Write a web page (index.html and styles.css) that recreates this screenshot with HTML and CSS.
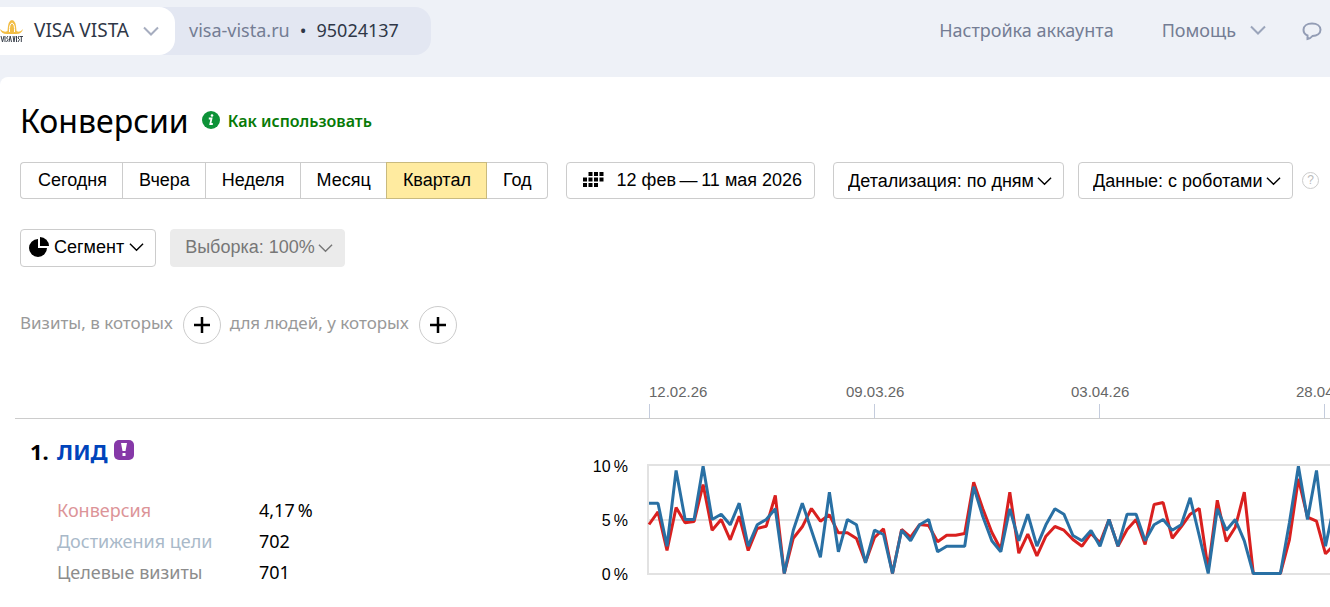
FILE: index.html
```html
<!DOCTYPE html>
<html lang="ru">
<head>
<meta charset="utf-8">
<title>Конверсии</title>
<link rel="stylesheet" href="styles.css">
</head>
<body>
<header class="topbar">
  <div class="counter">
    <button class="account" type="button">
      <svg class="account-logo" viewBox="0 0 23 23" aria-hidden="true">
        <path d="M0 9Q4 13 7.500 11Q8 0 12 0Q16 0 16.500 11Q20 13 23 9Q22 14 16 14H7Q1 14 0 9Z" fill="#f2bd45"/>
        <path d="M9.500 12Q9 4 12 3Q15 4 14.500 12" fill="none" stroke="#fff" stroke-width="1"/>
        <path d="M1 16l1.500 6 1.500-6M5 16v6M8 16l-1.500 2 1.500 1.500-1.500 2.500M9 22l1.200-6 1.300 6M13 16l1 6 1-6M16.500 16v6M19 16l-1 2 1.500 1.500-1.500 2.500M19.500 16.500H23M21.300 16v6" fill="none" stroke="#3b424d" stroke-width="1"/>
      </svg>
      <span>VISA VISTA</span>
      <svg class="chevron" viewBox="0 0 16 10" aria-hidden="true"><path d="M1 1.500 8 8.500 15 1.500"/></svg>
    </button>
    <a class="site" href="#">visa-vista.ru</a>
    <span class="dot">•</span>
    <span class="counter-id">95024137</span>
  </div>
  <nav class="topnav">
    <a href="#">Настройка аккаунта</a>
    <button class="help" type="button">Помощь
      <svg class="chevron" viewBox="0 0 16 10" aria-hidden="true"><path d="M1 1.500 8 8.500 15 1.500"/></svg>
    </button>
    <button class="chat" type="button" aria-label="Чат">
      <svg viewBox="0 0 20 20" aria-hidden="true"><path d="M5.500 18V14.500C3 13.500 1.500 11.500 1.500 8.800 1.500 5 5 2.500 10 2.500S18.500 5 18.500 8.800C18.500 12.500 15 14.800 10.500 15Q8.500 17.500 5.500 18Z"/></svg>
    </button>
  </nav>
</header>
<main class="page">
  <div class="heading">
    <h1>Конверсии</h1>
    <a class="howto" href="#">
      <svg viewBox="0 0 18 18" aria-hidden="true"><circle cx="9" cy="9" r="9" fill="#0d9238"/><path d="M6.800 7.500H9.500L8.300 13H10.800" fill="none" stroke="#fff" stroke-width="1.800"/><circle cx="10" cy="4.500" r="1.300" fill="#fff"/></svg>
      <span>Как использовать</span></a>
  </div>
  <div class="toolbar">
    <div class="periods">
      <button type="button">Сегодня</button>
      <button type="button">Вчера</button>
      <button type="button">Неделя</button>
      <button type="button">Месяц</button>
      <button type="button" class="active">Квартал</button>
      <button type="button">Год</button>
    </div>
    <button class="box range" type="button">
      <svg viewBox="0 0 21 15" aria-hidden="true"><path d="M5.500 0h4v4h-4zM11 0h4v4h-4zM16.500 0h4v4h-4zM0 5.500h4v4H0zM5.500 5.500h4v4h-4zM11 5.500h4v4h-4zM16.500 5.500h4v4h-4zM0 11h4v4H0zM5.500 11h4v4h-4zM11 11h4v4h-4z"/></svg>
      12 фев&thinsp;—&thinsp;11 мая 2026
    </button>
    <div class="selects">
      <div class="pick"><select class="box" aria-label="Детализация"><option>Детализация: по дням</option></select>
        <svg class="chevron" viewBox="0 0 16 10" aria-hidden="true"><path d="M1 1.500 8 8.500 15 1.500"/></svg></div>
      <div class="pick"><select class="box" aria-label="Данные"><option>Данные: с роботами</option></select>
        <svg class="chevron" viewBox="0 0 16 10" aria-hidden="true"><path d="M1 1.500 8 8.500 15 1.500"/></svg></div>
    </div>
    <button class="hint" type="button" aria-label="Подсказка">?</button>
  </div>
  <div class="filters">
    <button class="box segment" type="button">
      <svg class="pie" viewBox="0 0 20 20" aria-hidden="true"><path d="M9 2V11H18A9 9 0 1 1 9 2Z"/><path d="M11 0A9 9 0 0 1 20 9H11Z"/></svg>
      Сегмент
      <svg class="chevron" viewBox="0 0 16 10" aria-hidden="true"><path d="M1 1.500 8 8.500 15 1.500"/></svg>
    </button>
    <div class="pick muted"><select class="box" aria-label="Выборка" disabled><option>Выборка: 100%</option></select>
      <svg class="chevron" viewBox="0 0 16 10" aria-hidden="true"><path d="M1 1.500 8 8.500 15 1.500"/></svg></div>
  </div>
  <div class="conditions">
    <span>Визиты, в которых</span>
    <button class="plus" type="button" aria-label="Добавить условие визита"><svg viewBox="0 0 16 16" aria-hidden="true"><path d="M8 0V16M0 8H16"/></svg></button>
    <span>для людей, у которых</span>
    <button class="plus" type="button" aria-label="Добавить условие людей"><svg viewBox="0 0 16 16" aria-hidden="true"><path d="M8 0V16M0 8H16"/></svg></button>
  </div>
  <section class="report">
    <div class="dates">
      <span>12.02.26</span><span>09.03.26</span><span>03.04.26</span><span>28.04.26</span>
    </div>
    <div class="goal">
      <div class="summary">
        <h2><span>1.</span><a href="#">ЛИД</a>
          <svg viewBox="0 0 20 20" aria-hidden="true"><rect width="20" height="20" rx="5" fill="#8638a8"/><path d="M7 3H13L11.500 11H8.500ZM8.500 13H11.500V16H8.500Z" fill="#fff"/></svg>
        </h2>
        <dl>
          <dt class="rate">Конверсия</dt><dd>4,17&thinsp;%</dd>
          <dt class="reach">Достижения цели</dt><dd>702</dd>
          <dt class="visits">Целевые визиты</dt><dd>701</dd>
        </dl>
      </div>
      <div class="scale"><span>10&thinsp;%</span><span>5&thinsp;%</span><span>0&thinsp;%</span></div>
      <div class="plot">
        <svg id="chart" width="801" height="112" role="img" aria-label="Конверсия и достижения цели по дням"></svg>
      </div>
    </div>
  </section>
</main>
<script src="chart.js"></script>
</body>
</html>
```
FILE: styles.css
```css
* { box-sizing: border-box; }
body {
  margin: 0;
  background: #eef1f7;
  color: #000;
  font-family: "Noto Sans", "Open Sans", sans-serif;
  font-size: 17px;
  overflow-x: hidden;
}
button, select { font: inherit; color: inherit; margin: 0; }
button { background: none; border: 0; padding: 0; white-space: nowrap; }
a { color: inherit; text-decoration: none; }
svg { display: block; flex: none; }
.chevron { width: 16px; height: 10px; fill: none; stroke: currentColor; stroke-width: 2; }

.topbar {
  display: flex;
  justify-content: space-between;
  align-items: flex-start;
  height: 77px;
  padding-top: 7px;
  font-size: 18px;
  line-height: 24px;
  white-space: nowrap;
}
.counter {
  display: flex;
  align-items: center;
  height: 48px;
  padding-right: 32px;
  background: #e3e7f2;
  border-radius: 0 16px 16px 0;
  color: #2f3747;
}
.account {
  display: flex;
  align-items: center;
  height: 48px;
  padding: 0 16px 0 0;
  margin-right: 14px;
  background: #fff;
  border-radius: 0 16px 16px 0;
  font-size: 19px;
}
.account-logo { width: 23px; height: 23px; margin-right: 11px; }
.account .chevron { margin-left: 14px; color: #a6adbf; }
.site { color: #747d94; }
.site, .dot, .counter-id, .account span, .topnav a { padding-bottom: 2px; }
.dot { margin: 0 10px; }
.topnav { display: flex; align-items: center; height: 48px; padding-right: 8px; color: #747d94; }
.help { display: flex; align-items: center; gap: 14px; margin: 0 36px 0 48px; padding-bottom: 2px; }
.help .chevron { color: #9ba5bb; }
.chat svg { width: 20px; height: 20px; fill: none; stroke: #939db5; stroke-width: 2; }

.page {
  min-height: 530px;
  padding: 24px 0 24px 20px;
  background: #fff;
  border-radius: 8px 0 0 0;
}
.heading { display: flex; align-items: center; gap: 13px; height: 40px; }
h1 { margin: 0; font-size: 32px; font-weight: 400; line-height: 40px; }
.howto { display: flex; align-items: center; gap: 8px; color: #077a07; font-weight: 600; font-size: 16px; line-height: 20px; }
.howto svg { width: 18px; height: 18px; margin-bottom: 2px; }

.toolbar { display: flex; align-items: center; margin-top: 21px; }
.toolbar, .filters { font-family: "Liberation Sans", Arial, sans-serif; font-size: 18px; }
.page .pick .chevron, .page .segment .chevron { width: 15px; stroke-width: 1.5; }
.periods { display: flex; margin-right: 18px; }
.periods button {
  height: 37px;
  padding: 0 15px 0 16px;
  border: 1px solid #ccc;
  border-right-width: 0;
}
.periods button:first-child { border-radius: 4px 0 0 4px; padding-left: 17px; }
.periods button:last-child { border-right-width: 1px; border-radius: 0 4px 4px 0; }
.periods .active { background: #ffeba0; border-color: #c9ba7e; border-right-width: 1px; }
.periods .active + button { border-left-width: 0; }
.box {
  height: 37px;
  background: #fff;
  border: 1px solid #ccc;
  border-radius: 4px;
  white-space: nowrap;
}
.range { display: flex; align-items: center; gap: 13px; padding: 0 12px 0 16px; margin-right: 18px; }
.range svg { width: 21px; height: 15px; margin-bottom: 2px; }
.selects { display: flex; gap: 14px; }
.pick { display: grid; align-items: center; }
.pick > * { grid-area: 1 / 1; }
.pick select { appearance: none; padding: 0 29px 0 14px; opacity: 1; }
.pick .chevron { justify-self: end; margin-right: 12px; pointer-events: none; }
.hint {
  flex: none;
  width: 17px;
  height: 17px;
  margin-left: 9px;
  border: 1px solid #ccc;
  border-radius: 50%;
  color: #bbb;
  font-size: 12px;
  line-height: 15px;
}
.filters { display: flex; gap: 14px; margin-top: 30px; }
.filters .box { height: 38px; padding-bottom: 2px; }
.segment { display: flex; align-items: center; gap: 5px; padding: 0 11px 0 8px; }
.pie { width: 20px; height: 20px; }
.muted { color: #777; }
.filters .muted .box { background: #ebebeb; border-color: #ebebeb; }

.conditions { display: flex; align-items: center; margin-top: 39px; color: #999; font-size: 17px; line-height: 20px; }
.conditions span { padding-bottom: 4px; }
.plus {
  display: grid;
  place-items: center;
  width: 38px;
  height: 38px;
  margin: 0 9px 0 10px;
  border: 1px solid #ccc;
  border-radius: 50%;
}
.plus svg { width: 16px; height: 16px; stroke: #000; stroke-width: 2.500; }

.report { margin-left: -5px; overflow: hidden; }
.dates {
  display: flex;
  height: 75px;
  padding: 38px 0 0 634px;
  border-bottom: 1px solid #ccc;
  color: #666;
  font: 15px/20px "Liberation Sans", Arial, sans-serif;
}
.dates span { flex: none; width: 225px; }
.dates span::after { content: ""; display: block; width: 1px; height: 14px; margin-top: 2px; background: #c4ccdd; }
.dates span + span { text-indent: -28px; }
.goal { display: flex; }
.summary { flex: none; width: 560px; padding: 15px 0 0 15px; }
h2 { display: flex; align-items: center; gap: 6px; margin: 0; font-size: 22px; line-height: 34px; }
h2 span { width: 21px; }
h2 a { color: #0044bb; }
h2 svg { width: 20px; height: 20px; margin-bottom: 2px; }
dl {
  display: grid;
  grid-template-columns: 202px auto;
  margin: 27px 0 0 27px;
  font-size: 18px;
  line-height: 31px;
}
dd { margin: 0; }
.rate { color: #dc9498; }
.reach { color: #a9b9c9; }
.visits { color: #8c8c8c; }
.scale {
  display: flex;
  flex: none;
  flex-direction: column;
  width: 53px;
  margin-top: 21px;
  text-align: right;
  font: 16px/54px "Liberation Sans", Arial, sans-serif;
}
.plot { flex: 1; min-width: 0; margin: 45px 0 0 19px; overflow: hidden; }
.grid { fill: none; stroke: #e2e2e2; stroke-width: 2; }
.line { fill: none; stroke-width: 3; stroke-linejoin: miter; stroke-miterlimit: 1; }
.line-rate { stroke: #d9201f; }
.line-reach { stroke: #2970a4; }
```
FILE: chart.js
```js
// Daily values, measured down from the 10 % line; 327 is zero.
const SCALE = 327;
const HEIGHT = 109;
const STEP = 9.02;
const rate = [180,142,258,129,175,171,60,197,165,226,155,258,192,185,93,327,221,187,132,170,151,205,205,222,293,219,193,327,195,218,180,183,232,212,212,207,53,132,203,255,83,266,209,274,215,186,197,225,245,207,235,165,245,195,165,240,120,114,221,187,149,132,315,107,231,188,83,327,327,327,327,226,43,158,170,268,240];
const reach = [116,116,245,18,165,165,5,165,149,181,116,245,181,165,133,327,197,116,197,278,83,262,165,181,295,197,210,327,197,229,181,165,262,245,245,245,67,155,229,262,133,229,149,245,181,133,149,213,229,198,245,165,245,149,149,229,181,165,197,181,100,213,327,133,197,165,229,327,327,327,327,175,5,165,18,245,117];

const svg = document.getElementById('chart');

function add(tag, attrs) {
  const el = document.createElementNS('http://www.w3.org/2000/svg', tag);
  for (const name in attrs) el.setAttribute(name, attrs[name]);
  svg.appendChild(el);
}

function line(values, name) {
  const points = values.map((v, i) => `${(2 + i * STEP).toFixed(1)},${(v / SCALE * HEIGHT + 0.5).toFixed(1)}`).join(' ');
  add('polyline', { points, class: `line ${name}` });
}

add('path', { d: 'M801 1H1V110H801M1 56H801', class: 'grid' });
line(rate, 'line-rate');
line(reach, 'line-reach');
```
